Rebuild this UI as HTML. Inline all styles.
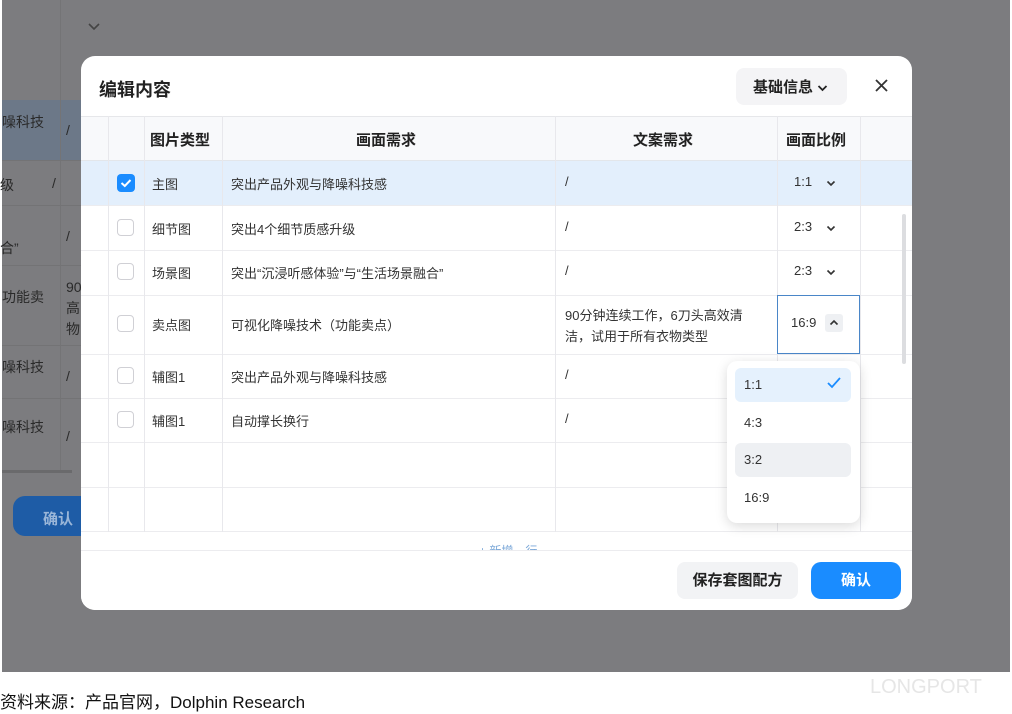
<!DOCTYPE html>
<html><head><meta charset="utf-8"><style>
*{margin:0;padding:0;box-sizing:border-box}
body{width:1012px;height:714px;background:#fff;position:relative;overflow:hidden;font-family:"Liberation Sans","Noto Sans CJK SC",sans-serif;color:#333}
.a{position:absolute}
.ov{left:2px;top:0;width:1008px;height:672px;background:#7c7c7f}
.bg{font-size:14px;color:#2a2a2a}
.m{left:81px;top:56px;width:831px;height:554px;background:#fff;border-radius:14px;overflow:hidden}
.vl{width:1px;background:#e8e8ec}
.t{font-size:13px;color:#333;white-space:nowrap}
.th{font-size:15px;font-weight:bold;color:#222}
.cb{width:17px;height:17px;border:1px solid #d0d0d5;border-radius:4px;background:#fff}
.cv{position:absolute}
</style></head><body>
<div class="a ov"></div>
<div class="a" style="left:2px;top:100px;width:79px;height:60px;background:#6c7888"></div>
<div class="a" style="left:60px;top:0;width:1px;height:470px;background:#747476"></div>
<div class="a" style="left:2px;top:160px;width:79px;height:1px;background:#737375"></div>
<div class="a" style="left:2px;top:205px;width:79px;height:1px;background:#737375"></div>
<div class="a" style="left:2px;top:265px;width:79px;height:1px;background:#737375"></div>
<div class="a" style="left:2px;top:345px;width:79px;height:1px;background:#737375"></div>
<div class="a" style="left:2px;top:398px;width:79px;height:1px;background:#737375"></div>
<div class="a" style="left:2px;top:470px;width:70px;height:3px;background:#6a6a6c"></div>
<svg class="a" style="left:87px;top:22px" width="14" height="10" viewBox="0 0 14 10"><path d="M2 2L7 7L12 2" stroke="#444" stroke-width="1.6" fill="none"/></svg>
<div class="a bg" style="left:2px;top:112px">噪科技</div><div class="a bg" style="left:66px;top:122px">/</div>
<div class="a bg" style="left:0px;top:175px">级</div><div class="a bg" style="left:52px;top:175px">/</div>
<div class="a bg" style="left:0px;top:238px">合”</div><div class="a bg" style="left:66px;top:228px">/</div>
<div class="a bg" style="left:2px;top:287px">功能卖</div><div class="a bg" style="left:66px;top:277px;line-height:21px">90<br>高<br>物</div>
<div class="a bg" style="left:2px;top:357px">噪科技</div><div class="a bg" style="left:66px;top:368px">/</div>
<div class="a bg" style="left:2px;top:417px">噪科技</div><div class="a bg" style="left:66px;top:428px">/</div>
<div class="a" style="left:13px;top:496px;width:80px;height:40px;background:#1e5ca6;border-radius:12px;color:#9ab6d8;font-size:15px;font-weight:bold;padding:12px 0 0 30px">确认</div>

<div class="a m">
 <div class="a" style="left:18px;top:20px;font-size:18px;font-weight:bold;color:#222">编辑内容</div>
 <div class="a" style="left:655px;top:12px;width:111px;height:37px;background:#f4f4f6;border-radius:8px;font-size:15px;font-weight:bold;color:#222;padding:8px 0 0 17px">基础信息 <svg width="11" height="8" viewBox="0 0 11 8"><path d="M1.5 2 L5.5 6 L9.5 2" stroke="#222" stroke-width="1.8" fill="none"/></svg></div>
 <svg class="a" style="left:793px;top:22px" width="15" height="15" viewBox="0 0 15 15"><path d="M2 2L13 13M13 2L2 13" stroke="#333" stroke-width="1.8"/></svg>
 <div class="a" style="left:0;top:60px;width:831px;height:44px;background:#f8f9fb"></div>
 <div class="a" style="left:0;top:104px;width:831px;height:45px;background:#e3effc"></div>
 <div class="a" style="left:0;top:60px;width:831px;height:1px;background:#e6e7ea"></div>
 <div class="a" style="left:0;top:104px;width:831px;height:1px;background:#e3e6ea"></div>
 <div class="a" style="left:0;top:149px;width:831px;height:1px;background:#ececef"></div>
 <div class="a" style="left:0;top:194px;width:831px;height:1px;background:#ececef"></div>
 <div class="a" style="left:0;top:239px;width:831px;height:1px;background:#ececef"></div>
 <div class="a" style="left:0;top:298px;width:831px;height:1px;background:#ececef"></div>
 <div class="a" style="left:0;top:342px;width:831px;height:1px;background:#ececef"></div>
 <div class="a" style="left:0;top:386px;width:831px;height:1px;background:#ececef"></div>
 <div class="a" style="left:0;top:431px;width:831px;height:1px;background:#ececef"></div>
 <div class="a" style="left:0;top:475px;width:831px;height:1px;background:#ececef"></div>
 <div class="a vl" style="left:27px;top:60px;height:416px"></div>
 <div class="a vl" style="left:63px;top:60px;height:416px"></div>
 <div class="a vl" style="left:141px;top:60px;height:416px"></div>
 <div class="a vl" style="left:474px;top:60px;height:416px"></div>
 <div class="a vl" style="left:696px;top:60px;height:416px"></div>
 <div class="a vl" style="left:779px;top:60px;height:416px"></div>
 <div class="a" style="left:821px;top:158px;width:4px;height:150px;background:#dcdde0;border-radius:2px"></div>
 <div class="a th" style="left:69px;top:73px">图片类型</div>
 <div class="a th" style="left:275px;top:73px">画面需求</div>
 <div class="a th" style="left:552px;top:73px">文案需求</div>
 <div class="a th" style="left:705px;top:73px">画面比例</div>
 <div class="a" style="left:36px;top:118px;width:18px;height:18px;background:#1a8cff;border-radius:4px"><svg width="18" height="18" viewBox="0 0 18 18"><path d="M4.5 9L7.8 12L13.5 6" stroke="#fff" stroke-width="2" fill="none"/></svg></div>
 <div class="a t" style="left:71px;top:118px">主图</div>
 <div class="a t" style="left:150px;top:118px">突出产品外观与降噪科技感</div>
 <div class="a t" style="left:484px;top:118px">/</div>
 <div class="a t" style="left:713px;top:118px">1:1</div>
 <svg class="cv" style="left:745px;top:124px" width="10" height="7" viewBox="0 0 10 7"><path d="M1.5 1.5L5 5L8.5 1.5" stroke="#333" stroke-width="1.6" fill="none"/></svg>
 <div class="cb a" style="left:36px;top:163px"></div>
 <div class="a t" style="left:71px;top:163px">细节图</div>
 <div class="a t" style="left:150px;top:163px">突出4个细节质感升级</div>
 <div class="a t" style="left:484px;top:163px">/</div>
 <div class="a t" style="left:713px;top:163px">2:3</div>
 <svg class="cv" style="left:745px;top:169px" width="10" height="7" viewBox="0 0 10 7"><path d="M1.5 1.5L5 5L8.5 1.5" stroke="#333" stroke-width="1.6" fill="none"/></svg>
 <div class="cb a" style="left:36px;top:207px"></div>
 <div class="a t" style="left:71px;top:207px">场景图</div>
 <div class="a t" style="left:150px;top:207px">突出“沉浸听感体验”与“生活场景融合”</div>
 <div class="a t" style="left:484px;top:207px">/</div>
 <div class="a t" style="left:713px;top:207px">2:3</div>
 <svg class="cv" style="left:745px;top:213px" width="10" height="7" viewBox="0 0 10 7"><path d="M1.5 1.5L5 5L8.5 1.5" stroke="#333" stroke-width="1.6" fill="none"/></svg>
 <div class="cb a" style="left:36px;top:259px"></div>
 <div class="a t" style="left:71px;top:259px">卖点图</div>
 <div class="a t" style="left:150px;top:259px">可视化降噪技术（功能卖点）</div>
 <div class="a t" style="left:484px;top:249px;line-height:21px">90分钟连续工作，6刀头高效清<br>洁，试用于所有衣物类型</div>
 <div class="a" style="left:696px;top:239px;width:83px;height:59px;border:1px solid #4a86c8;background:#fff"></div>
 <div class="a t" style="left:710px;top:259px">16:9</div>
 <div class="a" style="left:744px;top:258px;width:18px;height:18px;background:#eef0f3;border-radius:3px"><svg width="18" height="18" viewBox="0 0 18 18"><path d="M5.5 10.5L9 7L12.5 10.5" stroke="#333" stroke-width="1.6" fill="none"/></svg></div>
 <div class="cb a" style="left:36px;top:311px"></div>
 <div class="a t" style="left:71px;top:311px">辅图1</div>
 <div class="a t" style="left:150px;top:311px">突出产品外观与降噪科技感</div>
 <div class="a t" style="left:484px;top:311px">/</div>
 <div class="cb a" style="left:36px;top:355px"></div>
 <div class="a t" style="left:71px;top:355px">辅图1</div>
 <div class="a t" style="left:150px;top:355px">自动撑长换行</div>
 <div class="a t" style="left:484px;top:355px">/</div>
 <div class="a" style="left:398px;top:486px;font-size:12px;color:#7aa7d8">+ 新增一行</div>
 <div class="a" style="left:0;top:494px;width:831px;height:60px;background:#fff"></div>
 <div class="a" style="left:0;top:494px;width:831px;height:1px;background:#ececef"></div>
 <div class="a" style="left:596px;top:506px;width:121px;height:37px;background:#f2f3f5;border-radius:8px;font-size:15px;font-weight:bold;color:#222;text-align:center;line-height:37px">保存套图配方</div>
 <div class="a" style="left:730px;top:506px;width:90px;height:37px;background:#1a8cff;border-radius:10px;font-size:15px;font-weight:bold;color:#fff;text-align:center;line-height:37px">确认</div>
</div>
<div class="a" style="left:727px;top:361px;width:133px;height:162px;background:#fff;border-radius:10px;box-shadow:0 3px 12px rgba(0,0,0,.15)"></div>
<div class="a" style="left:735px;top:368px;width:116px;height:34px;background:#e5f1fd;border-radius:6px"></div>
<div class="a t" style="left:744px;top:377px">1:1</div>
<svg class="a" style="left:826px;top:376px" width="16" height="14" viewBox="0 0 16 14"><path d="M2 7L6 11L14 2" stroke="#1a8cff" stroke-width="1.8" fill="none"/></svg>
<div class="a t" style="left:744px;top:415px">4:3</div>
<div class="a" style="left:735px;top:443px;width:116px;height:34px;background:#eef0f3;border-radius:6px"></div>
<div class="a t" style="left:744px;top:452px">3:2</div>
<div class="a t" style="left:744px;top:490px">16:9</div>
<div class="a" style="left:0;top:688px;font-size:17px;color:#111">资料来源：产品官网，Dolphin Research</div>
<div class="a" style="left:870px;top:676px;font-size:20px;color:#e6e6e6">LONGPORT</div>
</body></html>
